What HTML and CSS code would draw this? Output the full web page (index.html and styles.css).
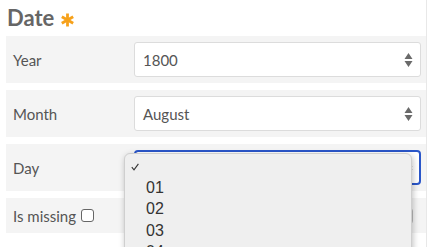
FILE: index.html
```html
<!DOCTYPE html>
<html>
<head>
<meta charset="utf-8">
<link rel="stylesheet" href="styles.css">
</head>
<body>
<div class="panel">
  <h2 class="title">Date <svg class="req" width="13" height="14" viewBox="0 0 13 14"><g stroke="#f6a11a" stroke-width="2.8" stroke-linecap="butt"><line x1="6.5" y1="0.5" x2="6.5" y2="13.5"/><line x1="0.8" y1="3.7" x2="12.2" y2="10.3"/><line x1="0.8" y1="10.3" x2="12.2" y2="3.7"/></g></svg></h2>
  <div class="rows">
    <div class="row">
      <span class="label">Year</span>
      <div class="select"><span class="value">1800</span>
        <svg class="arrows" width="9" height="16" viewBox="0 0 9 16"><path d="M4.5 1 L8.5 7 L0.5 7 Z M0.5 9 L8.5 9 L4.5 15 Z" fill="#6a6a6a"/></svg>
      </div>
    </div>
    <div class="row">
      <span class="label">Month</span>
      <div class="select"><span class="value">August</span>
        <svg class="arrows" width="9" height="16" viewBox="0 0 9 16"><path d="M4.5 1 L8.5 7 L0.5 7 Z M0.5 9 L8.5 9 L4.5 15 Z" fill="#6a6a6a"/></svg>
      </div>
    </div>
    <div class="row">
      <span class="label">Day</span>
      <div class="select focused"><span class="value"></span>
        <svg class="arrows" width="9" height="16" viewBox="0 0 9 16"><path d="M4.5 1 L8.5 7 L0.5 7 Z M0.5 9 L8.5 9 L4.5 15 Z" fill="#6a6a6a"/></svg>
      </div>
    </div>
    <div class="row short">
      <span class="check-label">Is missing <span class="checkbox"></span></span>
      <div class="note"></div>
    </div>
  </div>
  <div class="dropdown">
    <div class="opt"><svg class="tick" width="8" height="8" viewBox="0 0 8 8"><path d="M0.8 4.2 L3 6.8 L7.4 0.8" fill="none" stroke="#333" stroke-width="1.1"/></svg></div>
    <div class="opt">01</div>
    <div class="opt">02</div>
    <div class="opt">03</div>
    <div class="opt">04</div>
  </div>
</div>
</body>
</html>
```
FILE: styles.css
```css
html, body {
  margin: 0;
  padding: 0;
  background: #fff;
  overflow: hidden;
}
body {
  font-family: Lato, "Open Sans", sans-serif;
  color: #555;
}
.panel {
  position: relative;
  width: 420px;
  height: 247px;
  padding-left: 6px;
  border-right: 1px solid #e8e8e8;
  overflow: hidden;
}
.title {
  margin: 0;
  padding: 3px 0 0 1px;
  height: 33px;
  font-size: 22px;
  line-height: 30px;
  font-weight: 700;
  color: #666;
}
.req {
  display: inline-block;
  vertical-align: -1px;
  margin-left: 1px;
}
.rows {
  display: flex;
  flex-direction: column;
  gap: 7px;
}
.row {
  height: 47px;
  background: #f4f4f4;
  display: flex;
  align-items: center;
  padding: 0 5px 0 7px;
}
.row.short {
  height: 35px;
}
.label {
  width: 121px;
  font-size: 15px;
}
.select {
  flex: 1;
  height: 33px;
  background: #fff;
  border: 1px solid #dcdcdc;
  border-radius: 3px;
  display: flex;
  align-items: center;
  padding: 0 7px 0 8px;
  font-size: 15px;
  color: #555;
}
.select.focused {
  border: 2px solid #2a56c9;
  height: 31px;
  border-radius: 4px;
  padding: 0 6px 0 7px;
}
.value {
  flex: 1;
}
.arrows {
  display: block;
}
.check-label {
  display: flex;
  align-items: center;
  gap: 5px;
  font-size: 15px;
}
.checkbox {
  width: 11px;
  height: 11px;
  border: 1px solid #666;
  border-radius: 3px;
  background: #fff;
}
.note {
  margin-left: auto;
  margin-right: 8px;
  width: 220px;
  height: 14px;
  border: 1px solid #bbb;
  border-radius: 3px;
  background: #fff;
}
.dropdown {
  position: absolute;
  left: 124px;
  top: 153px;
  width: 286px;
  height: 110px;
  background: #efefef;
  border: 1px solid #cfcfcf;
  border-radius: 6px;
  box-shadow: 1px 2px 6px rgba(0, 0, 0, 0.25);
  padding-top: 1px;
  font-family: "Liberation Sans", Arial, sans-serif;
  font-size: 16px;
  color: #333;
}
.opt {
  height: 21.6px;
  line-height: 21.6px;
  padding-left: 21px;
}
.opt:first-child {
  position: relative;
}
.tick {
  position: absolute;
  left: 6px;
  top: 8px;
}
```
